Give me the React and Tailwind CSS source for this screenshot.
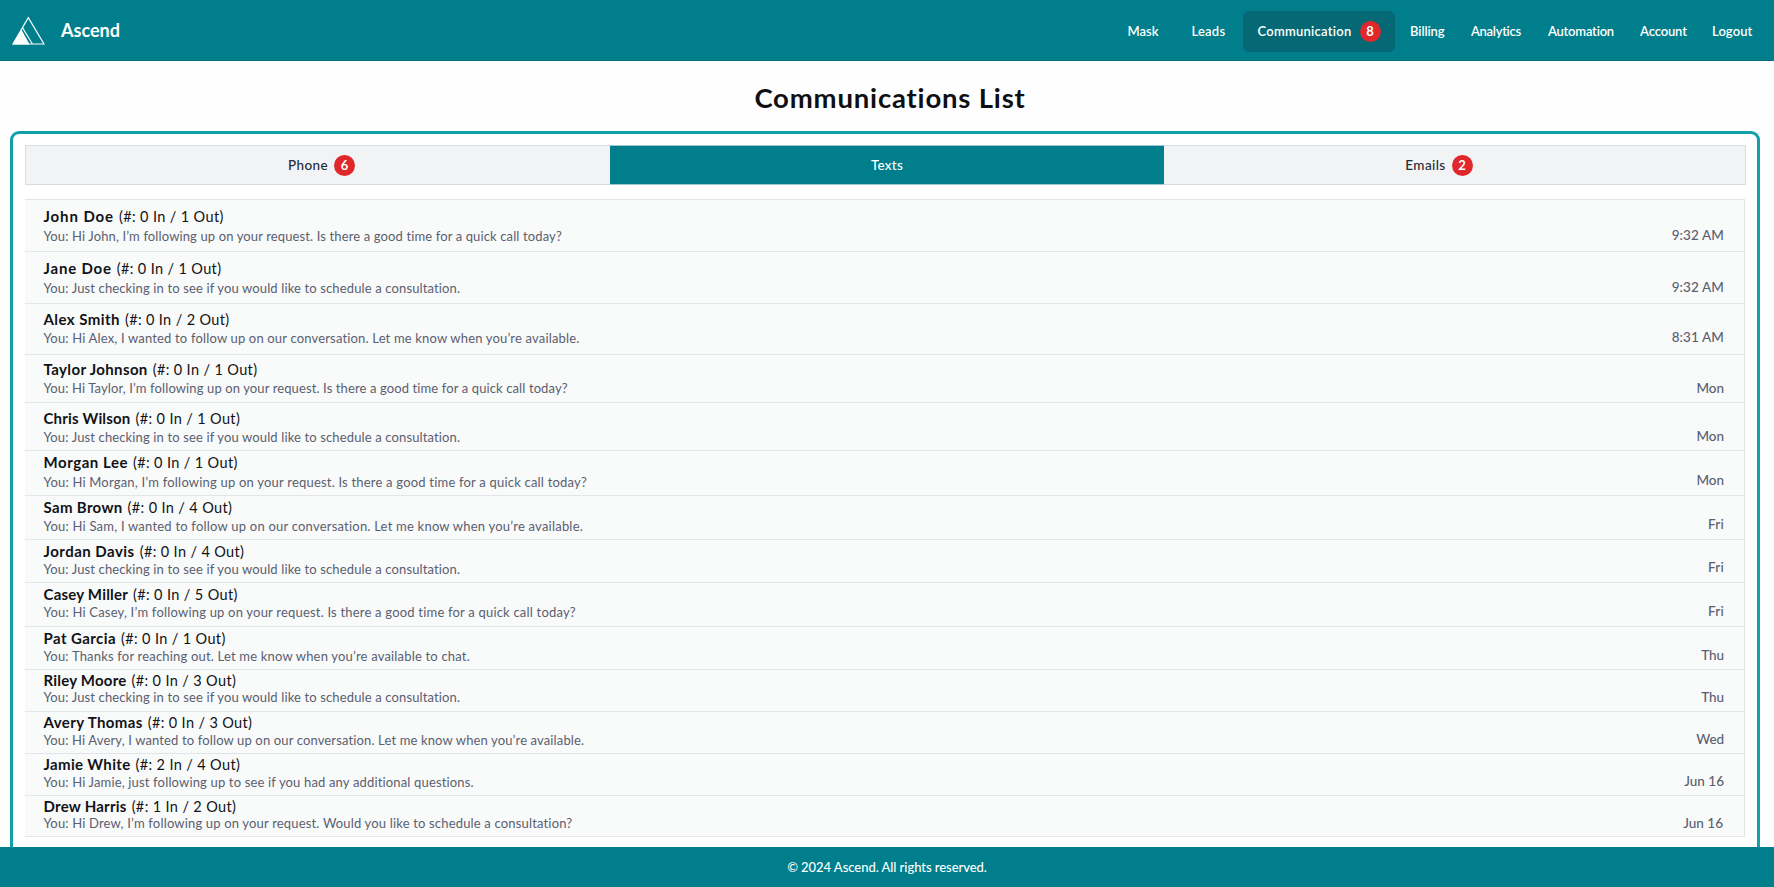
const NAV_BEFORE = [
  { label: 'Mask', cls: 'w-[31px]' },
  { label: 'Leads', cls: 'ml-[33px] w-[34px] tracking-[0.2px]' },
];

const NAV_AFTER = [
  { label: 'Billing', cls: 'ml-[15px] w-[34px] tracking-[-0.1px]' },
  { label: 'Analytics', cls: 'ml-[27px] w-[49px] tracking-[-0.3px]' },
  { label: 'Automation', cls: 'ml-[28px] w-[65px] tracking-[-0.22px]' },
  { label: 'Account', cls: 'ml-[27px] w-[47px] tracking-[-0.12px]' },
  { label: 'Logout', cls: 'ml-[25px] w-[40px] tracking-[0.08px]' },
];

const REQUEST = 'I’m following up on your request. Is there a good time for a quick call today?';
const CHECKING = 'You: Just checking in to see if you would like to schedule a consultation.';
const FOLLOW = 'I wanted to follow up on our conversation. Let me know when you’re available.';

const THREADS = [
  { name: 'John Doe', inn: 0, out: 1, text: `You: Hi John, ${REQUEST}`, time: '9:32 AM', row: 'h-[52px] pt-[8px]', nameCls: 'tracking-[0.9px]', textCls: 'mt-[3px] tracking-[0.125px]', timeCls: 'mt-[18px] tracking-[0.1px]' },
  { name: 'Jane Doe', inn: 0, out: 1, text: CHECKING, time: '9:32 AM', row: 'h-[52px] pt-[8px]', nameCls: 'tracking-[0.8px]', textCls: 'mt-[3px] tracking-[0.135px]', timeCls: 'mt-[18px] tracking-[0.1px]' },
  { name: 'Alex Smith', inn: 0, out: 2, text: `You: Hi Alex, ${FOLLOW}`, time: '8:31 AM', row: 'h-[51px] pt-[7px]', nameCls: 'tracking-[0.44px]', textCls: 'mt-[2px] tracking-[0.17px]', timeCls: 'mt-[17px] tracking-[0.1px]' },
  { name: 'Taylor Johnson', inn: 0, out: 1, text: `You: Hi Taylor, ${REQUEST}`, time: 'Mon', row: 'h-[48px] pt-[6px]', nameCls: 'tracking-[0.38px]', textCls: 'mt-[2px] tracking-[0.113px]', timeCls: 'mt-[18px]' },
  { name: 'Chris Wilson', inn: 0, out: 1, text: CHECKING, time: 'Mon', row: 'h-[48px] pt-[7px]', nameCls: 'tracking-[0.18px]', textCls: 'mt-[2px] tracking-[0.135px]', timeCls: 'mt-[17px]' },
  { name: 'Morgan Lee', inn: 0, out: 1, text: `You: Hi Morgan, ${REQUEST}`, time: 'Mon', row: 'h-[45px] pt-[3px]', nameCls: 'tracking-[0.54px]', textCls: 'mt-[3px] tracking-[0.203px]', timeCls: 'mt-[17px]' },
  { name: 'Sam Brown', inn: 0, out: 4, text: `You: Hi Sam, ${FOLLOW}`, time: 'Fri', row: 'h-[44px] pt-[3px]', nameCls: 'tracking-[0.34px]', textCls: 'mt-[2px] tracking-[0.217px]', timeCls: 'mt-[16px] tracking-[0.2px]' },
  { name: 'Jordan Davis', inn: 0, out: 4, text: CHECKING, time: 'Fri', row: 'h-[43px] pt-[3px]', nameCls: 'tracking-[0.48px]', textCls: 'mt-[1px] tracking-[0.135px]', timeCls: 'mt-[15px] tracking-[0.2px]' },
  { name: 'Casey Miller', inn: 0, out: 5, text: `You: Hi Casey, ${REQUEST}`, time: 'Fri', row: 'h-[44px] pt-[3px]', nameCls: 'tracking-[0.21px]', textCls: 'mt-[1px] tracking-[0.2px]', timeCls: 'mt-[16px] tracking-[0.2px]' },
  { name: 'Pat Garcia', inn: 0, out: 1, text: 'You: Thanks for reaching out. Let me know when you’re available to chat.', time: 'Thu', row: 'h-[43px] pt-[3px]', nameCls: 'tracking-[0.42px]', textCls: 'mt-px tracking-[0.185px]', timeCls: 'mt-[16px] tracking-[-0.1px]' },
  { name: 'Riley Moore', inn: 0, out: 3, text: CHECKING, time: 'Thu', row: 'h-[42px] pt-[2px]', nameCls: 'tracking-[0.22px]', textCls: 'tracking-[0.135px]', timeCls: 'mt-[16px] tracking-[-0.1px]' },
  { name: 'Avery Thomas', inn: 0, out: 3, text: `You: Hi Avery, ${FOLLOW}`, time: 'Wed', row: 'h-[42px] pt-[2px]', nameCls: 'tracking-[0.39px]', textCls: 'mt-[1px] tracking-[0.138px]', timeCls: 'mt-[16px] tracking-[-0.1px]' },
  { name: 'Jamie White', inn: 2, out: 4, text: 'You: Hi Jamie, just following up to see if you had any additional questions.', time: 'Jun 16', row: 'h-[42px] pt-[2px]', nameCls: 'tracking-[0.35px]', textCls: 'mt-[1px] tracking-[0.16px]', timeCls: 'mt-[16px]' },
  { name: 'Drew Harris', inn: 1, out: 2, text: 'You: Hi Drew, I’m following up on your request. Would you like to schedule a consultation?', time: 'Jun 16', row: 'h-[41px] pt-[2px]', nameCls: 'tracking-[0.24px]', textCls: 'tracking-[0.17px]', timeCls: 'mt-[16px] mr-px' },
];

function Badge({ children }) {
  return (
    <span className="flex size-[21px] shrink-0 items-center justify-center rounded-full bg-[#e0272b] text-[13px] leading-none font-bold text-white">
      {children}
    </span>
  );
}

function Logo() {
  return (
    <svg className="ml-[11px] h-[30px] w-[35px] shrink-0" viewBox="0 0 35 30" fill="none">
      <path d="M17.3 2.6 L2 29 H33 Z" stroke="#fff" strokeWidth="1.15" />
      <path d="M10.4 14.6 L1.6 29.5 H18.6 Z" fill="#fff" />
      <path d="M11.6 12.9 L21.4 29" stroke="#fff" strokeWidth="1.1" />
    </svg>
  );
}

function Header() {
  return (
    <header className="flex h-[61px] items-center border-b border-[#046d79] bg-[#007e8b] text-white">
      <Logo />
      <span className="ml-[15px] text-[18px] leading-6 font-bold">Ascend</span>
      <nav className="mt-[2px] mr-[22px] ml-auto flex items-center text-[13px] leading-[18px] font-semibold whitespace-nowrap">
        {NAV_BEFORE.map((n) => (
          <a key={n.label} className={n.cls}>{n.label}</a>
        ))}
        <a className="ml-[17.5px] flex h-[41px] w-[152px] items-center rounded-[6px] bg-[#046975] pl-[14.5px]">
          <span className="w-[102px] tracking-[0.25px]">Communication</span>
          <Badge>8</Badge>
        </a>
        {NAV_AFTER.map((n) => (
          <a key={n.label} className={n.cls}>{n.label}</a>
        ))}
      </nav>
    </header>
  );
}

function Tabs() {
  return (
    <div className="flex h-10 text-[13.5px] leading-[18px] font-medium text-[#252a37]">
      <div className="flex w-[585px] items-center justify-center border border-r-0 border-[#d9dbe3] bg-[#f2f3f5] pl-[7px]">
        <span className="mr-[6px] tracking-[0.4px]">Phone</span>
        <Badge>6</Badge>
      </div>
      <div className="flex w-[554px] items-center justify-center border-y border-t-[#9cc9cf] border-b-[#9cc9cf] bg-[#007e8b] text-white">
        <span className="tracking-[0.25px]">Texts</span>
      </div>
      <div className="flex flex-1 items-center justify-center border border-l-0 border-[#d9dbe3] bg-[#f2f3f5] pr-[31px]">
        <span className="mr-[6px] tracking-[0.4px]">Emails</span>
        <Badge>2</Badge>
      </div>
    </div>
  );
}

function Thread({ t }) {
  return (
    <li className={`flex justify-between border-t border-[#e3e5ea] pr-[20px] pl-[18.5px] whitespace-nowrap ${t.row}`}>
      <div>
        <p className="flex h-4 items-baseline text-[15px] leading-[16px] text-[#111317]">
          <span className={`mr-[5px] font-bold ${t.nameCls}`}>{t.name}</span>
          <span className="text-[14.5px] tracking-[0.36px]">{`(#: ${t.inn} In / ${t.out} Out)`}</span>
        </p>
        <p className={`text-[13px] leading-[18px] text-[#5a6070] ${t.textCls}`}>{t.text}</p>
      </div>
      <time className={`text-[13.5px] leading-[18px] font-medium text-[#5a6070] ${t.timeCls}`}>{t.time}</time>
    </li>
  );
}

export default function App() {
  return (
    <div className="flex h-[887px] w-[1774px] flex-col overflow-hidden bg-[#fefefe] font-[Lato,sans-serif]">
      <Header />
      <h1 className="mt-[21px] ml-[6px] text-center text-[27.5px] leading-8 font-bold tracking-[0.82px] text-[#0e0f12]">
        Communications List
      </h1>
      <main className="mt-[17px] mr-[14px] ml-[10px] flex-1 rounded-t-[9px] border-[3px] border-b-0 border-[#12a0aa] bg-white pt-[11px] pr-[11px] pl-[12px]">
        <Tabs />
        <ul className="mt-[14px] mr-px border-r border-b border-[#e3e5ea] bg-[#f9fafa]">
          {THREADS.map((t) => (
            <Thread key={t.name} t={t} />
          ))}
        </ul>
      </main>
      <footer className="flex h-10 shrink-0 items-center justify-center bg-[#007e8b] text-[13px] leading-[18px] font-medium tracking-[-0.05px] text-white">
        © 2024 Ascend. All rights reserved.
      </footer>
    </div>
  );
}
